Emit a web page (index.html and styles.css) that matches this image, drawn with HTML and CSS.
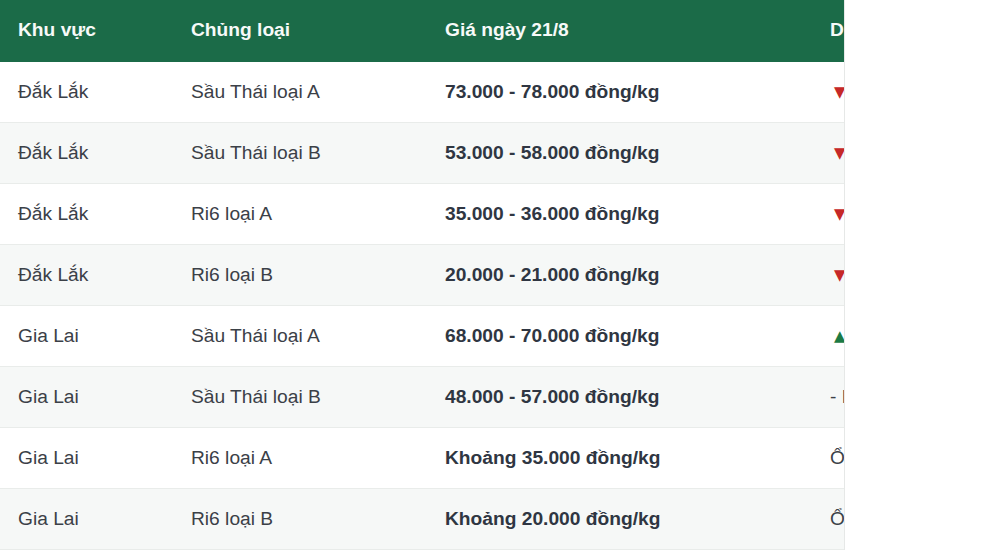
FILE: index.html
```html
<!DOCTYPE html>
<html lang="vi">
<head>
<meta charset="utf-8">
<title>Giá sầu riêng</title>
<link rel="stylesheet" href="styles.css">
</head>
<body>
<div class="table-wrap">
  <table class="price-table">
    <colgroup>
      <col class="c-region"><col class="c-type"><col class="c-price"><col class="c-trend">
    </colgroup>
    <thead>
      <tr><th>Khu vực</th><th>Chủng loại</th><th>Giá ngày 21/8</th><th>Diễn biến</th></tr>
    </thead>
    <tbody>
      <tr><td>Đắk Lắk</td><td>Sầu Thái loại A</td><td class="price">73.000 - 78.000 đồng/kg</td><td><span class="down">▼</span> Giảm 2.000 đồng</td></tr>
      <tr><td>Đắk Lắk</td><td>Sầu Thái loại B</td><td class="price">53.000 - 58.000 đồng/kg</td><td><span class="down">▼</span> Giảm 2.000 đồng</td></tr>
      <tr><td>Đắk Lắk</td><td>Ri6 loại A</td><td class="price">35.000 - 36.000 đồng/kg</td><td><span class="down">▼</span> Giảm 1.000 đồng</td></tr>
      <tr><td>Đắk Lắk</td><td>Ri6 loại B</td><td class="price">20.000 - 21.000 đồng/kg</td><td><span class="down">▼</span> Giảm 1.000 đồng</td></tr>
      <tr><td>Gia Lai</td><td>Sầu Thái loại A</td><td class="price">68.000 - 70.000 đồng/kg</td><td><span class="up">▲</span> Tăng 1.000 đồng</td></tr>
      <tr><td>Gia Lai</td><td>Sầu Thái loại B</td><td class="price">48.000 - 57.000 đồng/kg</td><td>- Không đổi</td></tr>
      <tr><td>Gia Lai</td><td>Ri6 loại A</td><td class="price">Khoảng 35.000 đồng/kg</td><td>Ổn định</td></tr>
      <tr><td>Gia Lai</td><td>Ri6 loại B</td><td class="price">Khoảng 20.000 đồng/kg</td><td>Ổn định</td></tr>
    </tbody>
  </table>
</div>
</body>
</html>
```

FILE: styles.css
```css
html, body {
  margin: 0;
  padding: 0;
  background: #ffffff;
}
body {
  font-family: "Liberation Sans", Arial, sans-serif;
  color: #333840;
}
.table-wrap {
  width: 844px;
  overflow: hidden;
  border-right: 1px solid #e6e8e7;
}
.price-table {
  width: 1060px;
  border-collapse: collapse;
  table-layout: fixed;
  font-size: 19.2px;
  line-height: 26px;
}
.c-region { width: 173px; }
.c-type { width: 254px; }
.c-price { width: 385px; }
.c-trend { width: 248px; }
.price-table th {
  background: #1b6b48;
  color: #f7faf8;
  font-weight: 700;
  text-align: left;
  padding: 17px 18px 19px;
  white-space: nowrap;
}
.price-table td {
  padding: 17px 18px;
  border-bottom: 1px solid #e9ecea;
  text-align: left;
  white-space: nowrap;
  color: #3b4047;
}
.price-table tbody tr:nth-child(even) td {
  background: #f6f8f7;
}
.price-table td.price {
  font-weight: 700;
  color: #2f3642;
}
.down,
.up {
  display: inline-block;
  font-family: "DejaVu Sans", sans-serif;
  font-size: 15px;
  line-height: 1;
  padding-left: 4px;
  vertical-align: 1px;
}
.down {
  color: #c62828;
}
.up {
  color: #1b7a45;
}
```
